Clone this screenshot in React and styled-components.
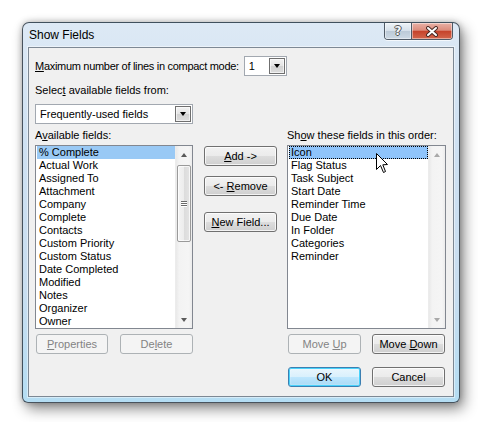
import React from "react";
import styled, { createGlobalStyle } from "styled-components";

const GlobalStyle = createGlobalStyle`
  html, body {
    margin: 0;
    padding: 0;
    background: #fff;
  }
  body {
    font-family: "Liberation Sans", Arial, sans-serif;
    font-size: 11px;
    color: #000;
  }
`;

const Stage = styled.div`
  width: 478px;
  height: 422px;
  box-sizing: border-box;
  padding: 22px 0 0 22px;
`;

const Window = styled.div`
  width: 438px;
  height: 381px;
  box-sizing: border-box;
  display: flex;
  flex-direction: column;
  padding: 0 5px 5px 5px;
  border: 1px solid rgba(35, 45, 55, 0.8);
  border-radius: 7px 7px 6px 6px;
  background: linear-gradient(
    to bottom,
    #dde9f5 0%,
    #cfe1f2 30%,
    #c9def0 70%,
    #b4ddf3 100%
  );
  box-shadow: 4px 6px 14px rgba(0, 0, 0, 0.45), 0 0 6px rgba(0, 0, 0, 0.25);
`;

const TitleBar = styled.div`
  height: 24px;
  display: flex;
  align-items: center;
`;

const Title = styled.div`
  font-size: 12px;
  padding-left: 1px;
  color: #000;
`;

const CaptionGroup = styled.div`
  margin-left: auto;
  margin-right: 1px;
  align-self: flex-start;
  display: flex;
  height: 16px;
  border: 1px solid #4f5a66;
  border-top: none;
  border-radius: 0 0 4px 4px;
  overflow: hidden;
  box-shadow: 0 1px 0 rgba(255, 255, 255, 0.7);
`;

const CaptionButton = styled.div`
  width: ${(p) => p.$w}px;
  display: flex;
  align-items: center;
  justify-content: center;
  background: ${(p) =>
    p.$close
      ? "linear-gradient(to bottom, #e9b1a6 0%, #dc8c7c 45%, #c6432b 52%, #d2664c 100%)"
      : "linear-gradient(to bottom, #eef3f8 0%, #d6e0ea 48%, #bccad8 52%, #cdd9e4 100%)"};
  border-left: ${(p) => (p.$close ? "1px solid #4f5a66" : "none")};
  box-shadow: inset 0 0 0 1px rgba(255, 255, 255, 0.45);
`;

const HelpGlyph = styled.span`
  font-family: "DejaVu Sans", sans-serif;
  font-size: 12px;
  font-weight: bold;
  color: #f4f6f8;
  text-shadow: 1px 0 0 #555, -1px 0 0 #555, 0 1px 0 #555, 0 -1px 0 #555;
  line-height: 14px;
`;

const Client = styled.div`
  flex: 1;
  display: flex;
  flex-direction: column;
  background: #f0f0f0;
  border: 1px solid #7d8894;
  padding: 8px 7px 9px 6px;
  box-shadow: 0 0 0 1px rgba(255, 255, 255, 0.45);
`;

const Row = styled.div`
  display: flex;
  align-items: center;
  gap: 5px;
  margin-top: ${(p) => p.$mt || 0}px;
`;

const Label = styled.div`
  height: 13px;
  line-height: 13px;
  white-space: nowrap;
  margin-top: ${(p) => p.$mt || 0}px;
  letter-spacing: ${(p) => p.$ls || 0}px;
`;

const U = styled.span`
  text-decoration: underline;
  text-underline-offset: 1px;
`;

const Combo = styled.div`
  width: ${(p) => p.$w}px;
  height: 20px;
  box-sizing: border-box;
  border: 1px solid #a2a8b0;
  background: #fff;
  display: flex;
  align-items: center;
  padding: 0 1px 0 4px;
  margin-top: ${(p) => p.$mt || 0}px;
`;

const ComboText = styled.div`
  flex: 1;
  line-height: 13px;
`;

const ComboButton = styled.div`
  width: 16px;
  height: 16px;
  box-sizing: border-box;
  border: 1px solid #6f6f6f;
  background: linear-gradient(to bottom, #f2f2f2 0%, #e4e4e4 50%, #d2d2d2 51%, #dcdcdc 100%);
  box-shadow: inset 0 0 0 1px rgba(255, 255, 255, 0.6);
  display: flex;
  align-items: center;
  justify-content: center;
`;

const Tri = styled.div`
  width: 0;
  height: 0;
  border-left: ${(p) => p.$s}px solid transparent;
  border-right: ${(p) => p.$s}px solid transparent;
  ${(p) =>
    p.$up
      ? `border-bottom: ${p.$h}px solid ${p.$c};`
      : `border-top: ${p.$h}px solid ${p.$c};`}
`;

const Columns = styled.div`
  display: flex;
  margin-top: 5px;
`;

const Column = styled.div`
  width: ${(p) => p.$w}px;
  margin-left: ${(p) => p.$ml || 0}px;
  display: flex;
  flex-direction: column;
`;

const ListBox = styled.div`
  position: relative;
  height: 184px;
  margin-top: 3px;
  box-sizing: border-box;
  border: 1px solid #828790;
  background: #fff;
  display: flex;
`;

const Items = styled.div`
  flex: 1;
  padding-left: 1px;
`;

const Item = styled.div`
  height: 13px;
  line-height: 13px;
  padding-left: 2px;
  box-sizing: border-box;
  white-space: nowrap;
  background: ${(p) => (p.$sel ? p.$selColor : "transparent")};
  outline: ${(p) => (p.$focus ? "1px dotted #000" : "none")};
  outline-offset: -1px;
`;

const ScrollBar = styled.div`
  width: 17px;
  display: flex;
  flex-direction: column;
  background: linear-gradient(to right, #e9e9e9 0%, #f3f3f3 20%, #f5f5f5 80%, #ececec 100%);
  border-left: 1px solid #ececec;
  box-sizing: border-box;
`;

const ScrollArrow = styled.div`
  height: 17px;
  display: flex;
  align-items: center;
  justify-content: center;
`;

const Thumb = styled.div`
  height: 77px;
  margin: 2px 1px 0 1px;
  box-sizing: border-box;
  border: 1px solid #9a9a9a;
  border-radius: 2px;
  background: linear-gradient(to right, #f4f4f4 0%, #ececec 50%, #dcdcdc 51%, #e4e4e4 100%);
  box-shadow: inset 0 0 0 1px rgba(255, 255, 255, 0.7);
  display: flex;
  flex-direction: column;
  align-items: center;
  justify-content: center;
  gap: 1px;
`;

const Grip = styled.div`
  width: 6px;
  height: 1px;
  background: #6a6a6a;
  box-shadow: 0 1px 0 #fff;
`;

const Spacer = styled.div`
  flex: 1;
`;

const Button = styled.div`
  width: ${(p) => p.$w || 73}px;
  height: 20px;
  box-sizing: border-box;
  margin-top: ${(p) => p.$mt || 0}px;
  border: 1px solid ${(p) => (p.$default ? "#3c7fb1" : p.$disabled ? "#adb2b5" : "#707070")};
  border-radius: 3px;
  display: flex;
  align-items: center;
  justify-content: center;
  white-space: nowrap;
  color: ${(p) => (p.$disabled ? "#838383" : "#000")};
  background: ${(p) =>
    p.$default
      ? "linear-gradient(to bottom, #eaf6fd 0%, #d9f0fc 50%, #bee6fd 51%, #a7d9f5 100%)"
      : p.$disabled
      ? "#f4f4f4"
      : "linear-gradient(to bottom, #f2f2f2 0%, #ebebeb 50%, #dddddd 51%, #cfcfcf 100%)"};
  box-shadow: ${(p) =>
    p.$default
      ? "inset 0 0 0 1px #48d2fb, inset 0 0 2px 1px rgba(255,255,255,0.6)"
      : p.$disabled
      ? "none"
      : "inset 0 0 0 1px rgba(255, 255, 255, 0.75)"};
`;

const ButtonRow = styled.div`
  display: flex;
  gap: ${(p) => p.$gap || 11}px;
  margin-top: ${(p) => p.$mt || 0}px;
  padding-left: ${(p) => p.$pl || 0}px;
`;

const Cursor = styled.svg`
  position: absolute;
  left: 88px;
  top: 7px;
`;

const available = [
  "% Complete",
  "Actual Work",
  "Assigned To",
  "Attachment",
  "Company",
  "Complete",
  "Contacts",
  "Custom Priority",
  "Custom Status",
  "Date Completed",
  "Modified",
  "Notes",
  "Organizer",
  "Owner",
];

const shown = [
  "Icon",
  "Flag Status",
  "Task Subject",
  "Start Date",
  "Reminder Time",
  "Due Date",
  "In Folder",
  "Categories",
  "Reminder",
];

function CloseGlyph() {
  return (
    <svg width="14" height="11" viewBox="0 0 14 11">
      <path d="M3 2 L11 9 M11 2 L3 9" stroke="#4a2a24" strokeWidth="4" strokeLinecap="round" />
      <path d="M3 2 L11 9 M11 2 L3 9" stroke="#fff" strokeWidth="2" strokeLinecap="round" />
    </svg>
  );
}

export default function App() {
  return (
    <>
      <GlobalStyle />
      <Stage>
        <Window>
          <TitleBar>
            <Title>Show Fields</Title>
            <CaptionGroup>
              <CaptionButton $w={26}>
                <HelpGlyph>?</HelpGlyph>
              </CaptionButton>
              <CaptionButton $w={40} $close>
                <CloseGlyph />
              </CaptionButton>
            </CaptionGroup>
          </TitleBar>
          <Client>
            <Row>
              <Label $ls={-0.3}>
                <U>M</U>aximum number of lines in compact mode:
              </Label>
              <Combo $w={43}>
                <ComboText>1</ComboText>
                <ComboButton>
                  <Tri $s={3.5} $h={4} $c="#000" />
                </ComboButton>
              </Combo>
            </Row>
            <Label $mt={8}>
              Selec<U>t</U> available fields from:
            </Label>
            <Combo $w={158} $mt={7}>
              <ComboText>Frequently-used fields</ComboText>
              <ComboButton>
                <Tri $s={3.5} $h={4} $c="#000" />
              </ComboButton>
            </Combo>
            <Columns>
              <Column $w={158}>
                <Label>
                  A<U>v</U>ailable fields:
                </Label>
                <ListBox>
                  <Items>
                    {available.map((f, i) => (
                      <Item key={f} $sel={i === 0} $selColor="#99c9f5">
                        {f}
                      </Item>
                    ))}
                  </Items>
                  <ScrollBar>
                    <ScrollArrow>
                      <Tri $up $s={3.5} $h={4} $c="#5a5a5a" />
                    </ScrollArrow>
                    <Thumb>
                      <Grip />
                      <Grip />
                      <Grip />
                    </Thumb>
                    <Spacer />
                    <ScrollArrow>
                      <Tri $s={3.5} $h={4} $c="#5a5a5a" />
                    </ScrollArrow>
                  </ScrollBar>
                </ListBox>
                <ButtonRow $mt={5} $gap={12} $pl={1}>
                  <Button $w={72} $disabled>
                    <span>
                      <U>P</U>roperties
                    </span>
                  </Button>
                  <Button $disabled>
                    <span>
                      De<U>l</U>ete
                    </span>
                  </Button>
                </ButtonRow>
              </Column>
              <Column $w={73} $ml={11}>
                <Button $mt={17}>
                  <span>
                    <U>A</U>dd -&gt;
                  </span>
                </Button>
                <Button $mt={10}>
                  <span>
                    &lt;- <U>R</U>emove
                  </span>
                </Button>
                <Button $mt={16}>
                  <span>
                    <U>N</U>ew Field...
                  </span>
                </Button>
              </Column>
              <Column $w={159} $ml={10}>
                <Label>
                  Sh<U>o</U>w these fields in this order:
                </Label>
                <ListBox>
                  <Items>
                    {shown.map((f, i) => (
                      <Item key={f} $sel={i === 0} $focus={i === 0} $selColor="#8fc4fb">
                        {f}
                      </Item>
                    ))}
                  </Items>
                  <ScrollBar>
                    <ScrollArrow>
                      <Tri $up $s={3.5} $h={4} $c="#a9a9a9" />
                    </ScrollArrow>
                    <Spacer />
                    <ScrollArrow>
                      <Tri $s={3.5} $h={4} $c="#a9a9a9" />
                    </ScrollArrow>
                  </ScrollBar>
                  <Cursor width="13" height="21" viewBox="0 0 13 21">
                    <path
                      d="M0.5 0.5 L0.5 16.5 L4.5 12.5 L7.5 19.5 L9.5 18.5 L6.8 11.8 L11.5 11.5 Z"
                      fill="#fff"
                      stroke="#000"
                      strokeWidth="1"
                      strokeLinejoin="miter"
                    />
                  </Cursor>
                </ListBox>
                <ButtonRow $mt={5} $gap={11} $pl={1}>
                  <Button $disabled>
                    <span>
                      Move <U>U</U>p
                    </span>
                  </Button>
                  <Button>
                    <span>
                      Move <U>D</U>own
                    </span>
                  </Button>
                </ButtonRow>
                <ButtonRow $mt={13} $gap={11} $pl={1}>
                  <Button $default>OK</Button>
                  <Button>Cancel</Button>
                </ButtonRow>
              </Column>
            </Columns>
          </Client>
        </Window>
      </Stage>
    </>
  );
}
